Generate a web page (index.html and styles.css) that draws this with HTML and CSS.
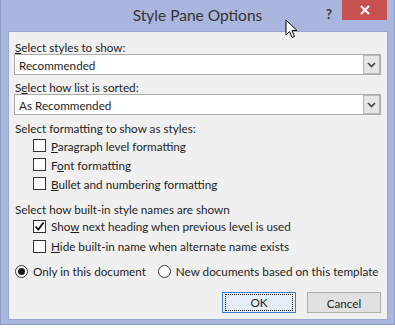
FILE: index.html
```html
<!DOCTYPE html>
<html lang="en">

<head>
    <meta charset="UTF-8">
    <title>Style Pane Options</title>
    <link rel="stylesheet" href="styles.css">
</head>

<body>

    <div class="window">
        <div class="titlebar">
            <div></div>
            <div class="title">Style Pane Options</div>
            <div class="controls">
                <div class="help">?</div>
                <div class="close">
                    <svg width="12" height="10" viewBox="0 0 12 10">
                        <path d="M2 1 L10 9 M10 1 L2 9" stroke="#fff" stroke-width="2" />
                    </svg>
                </div>
            </div>
        </div>

        <div class="panel">
            <div class="label"><u>S</u>elect styles to show:</div>
            <div class="select">
                <span>Recommended</span>
                <div class="drop"><svg width="9" height="6" viewBox="0 0 9 6"><path d="M1 1 L4.5 4.5 L8 1" fill="none" stroke="#444" stroke-width="1.6" /></svg></div>
            </div>

            <div class="label">S<u>e</u>lect how list is sorted:</div>
            <div class="select">
                <span>As Recommended</span>
                <div class="drop"><svg width="9" height="6" viewBox="0 0 9 6"><path d="M1 1 L4.5 4.5 L8 1" fill="none" stroke="#444" stroke-width="1.6" /></svg></div>
            </div>

            <div class="label group">Select formatting to show as styles:</div>
            <div class="checks">
                <div class="check"><span class="box"></span><span><u>P</u>aragraph level formatting</span></div>
                <div class="check"><span class="box"></span><span>F<u>o</u>nt formatting</span></div>
                <div class="check"><span class="box"></span><span><u>B</u>ullet and numbering formatting</span></div>
            </div>

            <div class="label group2">Select how built-in style names are shown</div>
            <div class="checks wide">
                <div class="check"><span class="box"><svg width="11" height="11" viewBox="0 0 11 11"><path d="M1.5 5.5 L4.3 8.5 L9.5 1.5" fill="none" stroke="#111" stroke-width="1.8" /></svg></span><span>Sho<u>w</u> next heading when previous level is used</span></div>
                <div class="check"><span class="box"></span><span><u>H</u>ide built-in name when alternate name exists</span></div>
            </div>

            <div class="radios">
                <div class="radio"><span class="dot on"></span><span>Only in this document</span></div>
                <div class="radio"><span class="dot"></span><span>New documents based on this template</span></div>
            </div>

            <div class="buttons">
                <div class="btn ok"><span>OK</span></div>
                <div class="btn cancel">Cancel</div>
            </div>
        </div>

        <svg class="cursor" width="14" height="21" viewBox="0 0 14 21">
            <path d="M1 1 L1 16 L4.5 12.5 L7 18.5 L9.5 17.5 L7 11.5 L12 11.5 Z" fill="#fff" stroke="#000" stroke-width="1" />
        </svg>
    </div>

</body>

</html>
```

FILE: styles.css
```css
body {
    margin: 0;
    padding: 0;
    background-color: #fff;
    font-family: 'Lato', sans-serif;
    font-size: 11.7px;
    color: #1e1e1e;
}

.window {
    position: relative;
    width: 395px;
    height: 325px;
    box-sizing: border-box;
    background-color: #abb6de;
    border: 1px solid #8f9cca;
    border-top: none;
    padding: 0 6px 4px 7px;
    display: flex;
    flex-direction: column;
}

.titlebar {
    height: 31px;
    display: grid;
    grid-template-columns: 1fr auto 1fr;
    margin: 0 -6px 0 -7px;
}

.title {
    font-size: 15.5px;
    line-height: 30px;
    color: #333;
    white-space: nowrap;
}

.controls {
    display: flex;
    justify-content: flex-end;
    align-items: flex-start;
    padding-right: 7px;
}

.help {
    font-weight: bold;
    font-size: 13px;
    line-height: 28px;
    color: #333;
    margin-right: 10px;
}

.close {
    width: 45px;
    height: 20px;
    background-color: #c75050;
    display: flex;
    align-items: center;
    justify-content: center;
}

.panel {
    flex: 1;
    background-color: #f0f0f0;
    border: 1px solid #9aa6d2;
    padding: 8px 6px 0 5px;
    white-space: nowrap;
}

.label {
    line-height: 14px;
    padding-left: 1px;
}

.select {
    height: 19px;
    border: 1px solid #acacac;
    background-color: #fff;
    display: flex;
    align-items: center;
    margin-bottom: 5px;
}

.select span {
    flex: 1;
    padding-left: 4px;
}

.drop {
    width: 15px;
    height: 17px;
    background-color: #e6e6e6;
    border: 1px solid #b5b5b5;
    display: flex;
    align-items: center;
    justify-content: center;
}

.group {
    margin-top: 6px;
    margin-bottom: 1px;
}

.group2 {
    margin-top: 9px;
}

.checks {
    padding-left: 19px;
}

.check {
    display: flex;
    align-items: center;
    height: 19px;
}

.wide .check {
    height: 20px;
}

.box {
    width: 11px;
    height: 11px;
    border: 1px solid #333;
    background-color: #fff;
    margin-right: 5px;
    display: flex;
    align-items: center;
    justify-content: center;
}

.radios {
    display: flex;
    align-items: center;
    height: 16px;
    margin-top: 7px;
    padding-left: 1px;
    gap: 12px;
}

.radio {
    display: flex;
    align-items: center;
}

.dot {
    width: 11px;
    height: 11px;
    border: 1px solid #333;
    border-radius: 50%;
    background-color: #fff;
    margin-right: 5px;
    display: flex;
    align-items: center;
    justify-content: center;
}

.dot.on::after {
    content: "";
    width: 7px;
    height: 7px;
    border-radius: 50%;
    background-color: #1a1a1a;
}

.buttons {
    display: flex;
    justify-content: flex-end;
    gap: 11px;
    margin-top: 13px;
}

.btn {
    width: 72px;
    height: 19px;
    border: 1px solid #adadad;
    background-color: #e1e1e1;
    display: flex;
    align-items: center;
    justify-content: center;
}

.btn.cancel {
    width: 72px;
}

.btn.ok {
    border-color: #3c7fd1;
    background-color: #e5eef9;
}

.btn.ok span {
    width: 66px;
    height: 15px;
    border: 1px dotted #000;
    text-align: center;
    line-height: 15px;
}

.cursor {
    position: absolute;
    left: 284px;
    top: 19px;
}
```
